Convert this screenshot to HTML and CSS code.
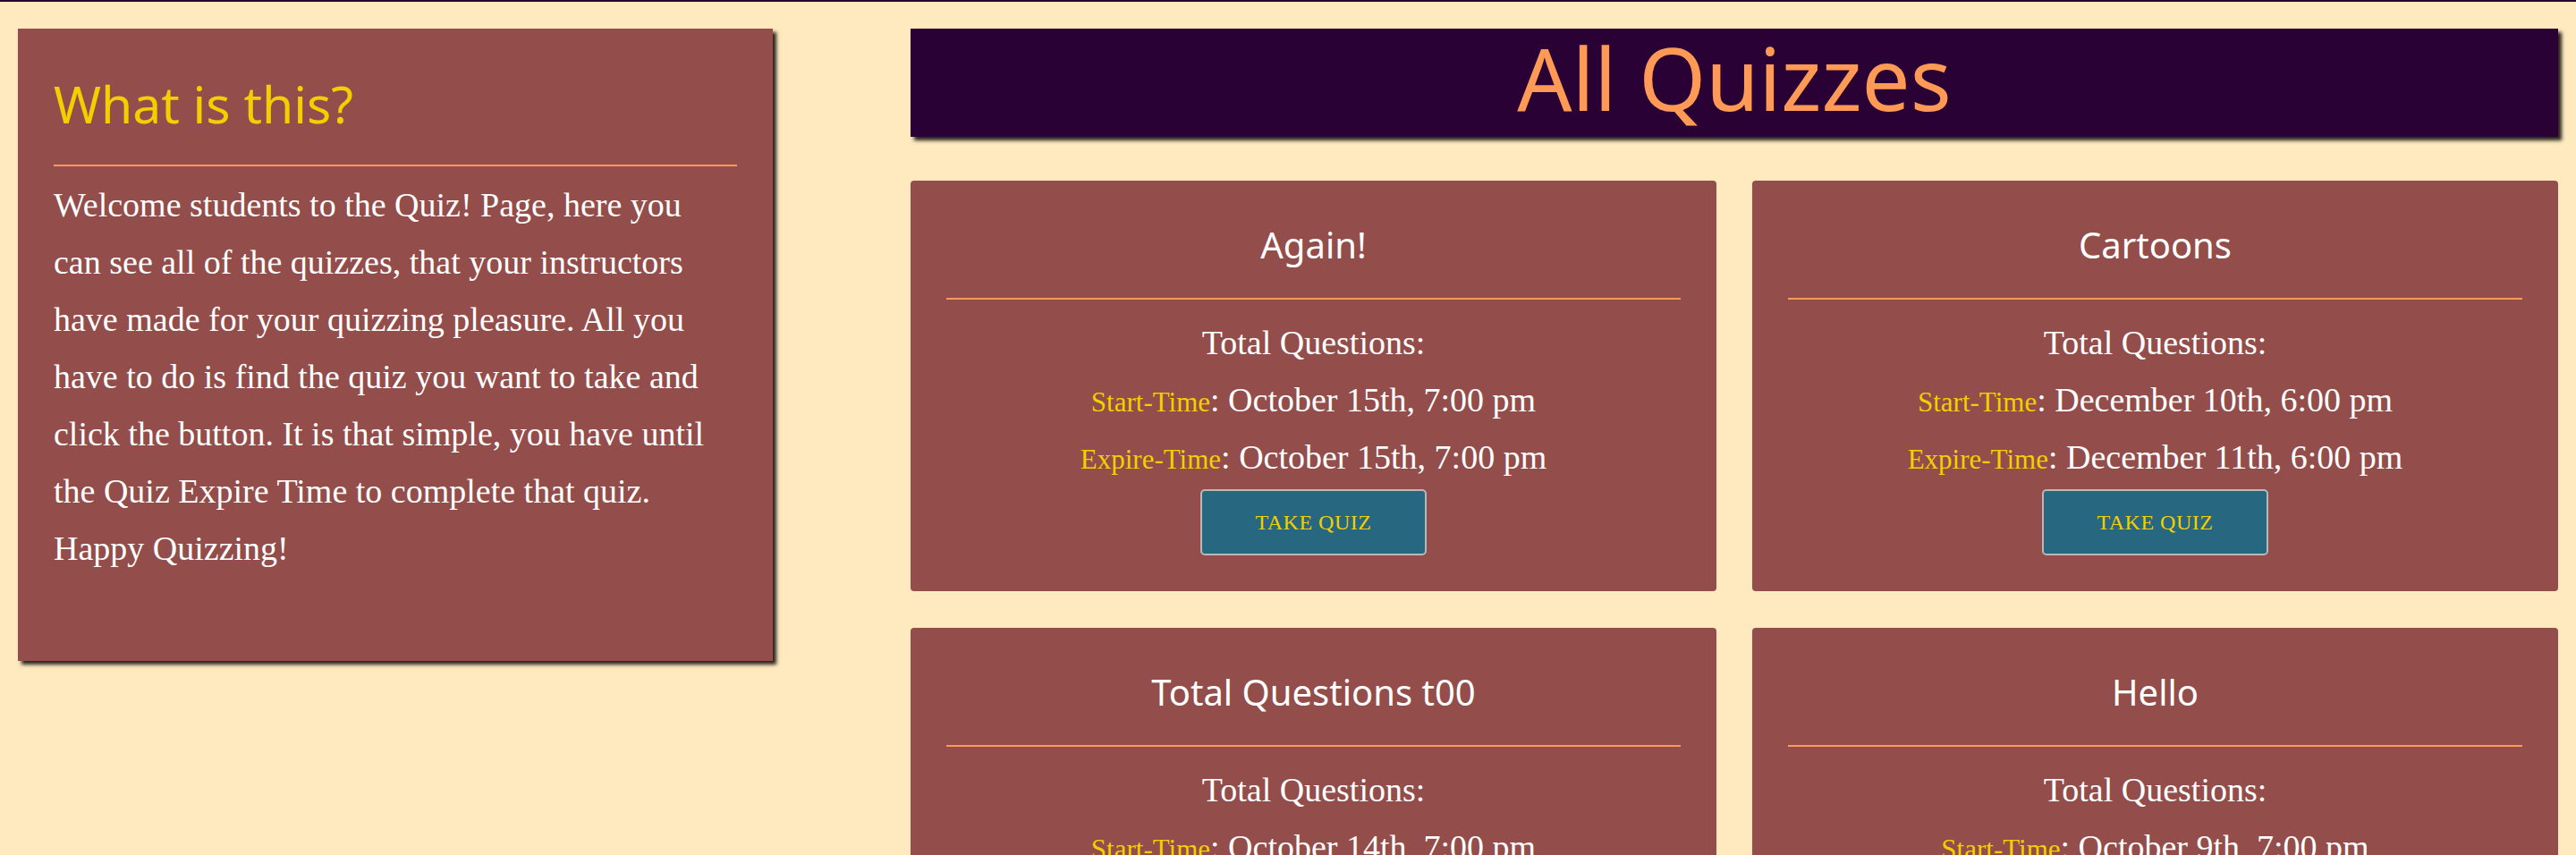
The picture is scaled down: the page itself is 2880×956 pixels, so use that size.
FILE: index.html
```html
<!DOCTYPE html>
<html lang="en">
<head>
<meta charset="utf-8">
<title>All Quizzes</title>
<link rel="stylesheet" href="styles.css">
</head>
<body>
<main class="layout">
  <aside class="about">
    <h2 class="about-title">What is this?</h2>
    <hr class="rule">
    <p class="about-text">Welcome students to the Quiz! Page, here you can see all of the quizzes, that your instructors have made for your quizzing pleasure. All you have to do is find the quiz you want to take and click the button. It is that simple, you have until the Quiz Expire Time to complete that quiz. Happy Quizzing!</p>
  </aside>
  <section class="quizzes">
    <h1 class="page-title">All Quizzes</h1>
    <div class="quiz-grid">
      <article class="quiz-card">
        <h3 class="quiz-name">Again!</h3>
        <hr class="rule card-rule">
        <p class="quiz-line">Total Questions:</p>
        <p class="quiz-line"><span class="label">Start-Time</span>: October 15th, 7:00 pm</p>
        <p class="quiz-line"><span class="label">Expire-Time</span>: October 15th, 7:00 pm</p>
        <button class="take-btn">Take Quiz</button>
      </article>
      <article class="quiz-card">
        <h3 class="quiz-name">Cartoons</h3>
        <hr class="rule card-rule">
        <p class="quiz-line">Total Questions:</p>
        <p class="quiz-line"><span class="label">Start-Time</span>: December 10th, 6:00 pm</p>
        <p class="quiz-line"><span class="label">Expire-Time</span>: December 11th, 6:00 pm</p>
        <button class="take-btn">Take Quiz</button>
      </article>
      <article class="quiz-card">
        <h3 class="quiz-name">Total Questions t00</h3>
        <hr class="rule card-rule">
        <p class="quiz-line">Total Questions:</p>
        <p class="quiz-line"><span class="label">Start-Time</span>: October 14th, 7:00 pm</p>
        <p class="quiz-line"><span class="label">Expire-Time</span>: October 15th, 7:00 pm</p>
        <button class="take-btn">Take Quiz</button>
      </article>
      <article class="quiz-card">
        <h3 class="quiz-name">Hello</h3>
        <hr class="rule card-rule">
        <p class="quiz-line">Total Questions:</p>
        <p class="quiz-line"><span class="label">Start-Time</span>: October 9th, 7:00 pm</p>
        <p class="quiz-line"><span class="label">Expire-Time</span>: October 10th, 7:00 pm</p>
        <button class="take-btn">Take Quiz</button>
      </article>
    </div>
  </section>
</main>
</body>
</html>
```
FILE: styles.css
```css
html, body {
  margin: 0;
  padding: 0;
}

body {
  background: #ffeabf;
  border-top: 2px solid #2a0134;
  font-family: "Liberation Serif", "Times New Roman", serif;
}

.layout {
  display: grid;
  grid-template-columns: 844px 1fr;
  column-gap: 154px;
  align-items: start;
  padding: 30px 20px 40px;
}

.about {
  background: #934d4a;
  padding: 50px 40px 50px;
  box-shadow: 4px 4px 4px rgba(0, 0, 0, 0.85);
}

.about-title {
  margin: 0;
  font: 400 57px/68px "Noto Sans", "DejaVu Sans", sans-serif;
  color: #f2d000;
}

.rule {
  border: 0;
  height: 2px;
  background: #ff9a56;
  margin: 34px 0 11px;
}

.about-text {
  margin: 0 0 44px;
  max-width: 750px;
  font: 38px/64px "Liberation Serif", "Times New Roman", serif;
  color: #ffffff;
}

.page-title {
  margin: 0 0 49px;
  padding: 2px 0 13px;
  background: #2a0134;
  color: #ff9a56;
  font: 400 96px/106px "Noto Sans", "DejaVu Sans", sans-serif;
  text-align: center;
  box-shadow: 4px 4px 4px rgba(0, 0, 0, 0.85);
}

.quiz-grid {
  display: grid;
  grid-template-columns: 1fr 1fr;
  column-gap: 40px;
  row-gap: 41px;
}

.quiz-card {
  background: #934d4a;
  border-radius: 4px;
  padding: 48px 40px 40px;
  text-align: center;
}

.quiz-name {
  margin: 0;
  font: 400 40px/48px "Noto Sans", "DejaVu Sans", sans-serif;
  color: #ffffff;
}

.card-rule {
  margin: 35px 0 16px;
}

.quiz-line {
  margin: 0;
  font: 38px/64px "Liberation Serif", "Times New Roman", serif;
  color: #ffffff;
}

.label {
  font-size: 31px;
  line-height: 1;
  color: #f2d000;
}

.take-btn {
  display: block;
  margin: 4px auto 0;
  padding: 21px 60px;
  background: #276880;
  border: 2px solid #b8b8b8;
  border-radius: 5px;
  color: #f2d000;
  font: 24px/28px "Liberation Serif", "Times New Roman", serif;
  text-transform: uppercase;
  letter-spacing: 0.5px;
  cursor: pointer;
}
```
